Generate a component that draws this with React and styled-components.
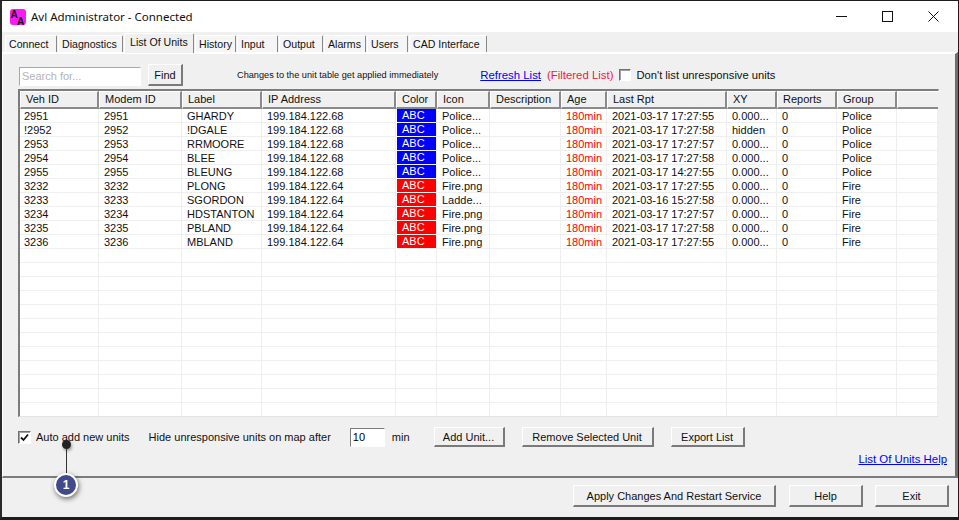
import React from 'react'
import styled, { createGlobalStyle } from 'styled-components'

const GlobalStyle = createGlobalStyle`
  html, body {
    margin: 0;
    padding: 0;
    background: #f0f0f0;
    overflow: hidden;
  }
  * {
    box-sizing: border-box;
  }
`

const Window = styled.div`
  position: relative;
  display: flex;
  flex-direction: column;
  width: 959px;
  height: 520px;
  border-top: 1px solid #1c1c1c;
  border-left: 2px solid #2a2a2a;
  border-right: 1px solid #1c1c1c;
  border-bottom: 3px solid #1c1c1c;
  background: #f0f0f0;
  font-family: 'Liberation Sans', Arial, sans-serif;
  font-size: 11px;
  color: #111;
`

const TitleBar = styled.div`
  display: flex;
  align-items: center;
  flex: none;
  height: 31px;
  padding-left: 8px;
  background: #fff;
`

const Title = styled.span`
  margin-left: 5px;
  font-family: 'Noto Sans', sans-serif;
  font-size: 11.5px;
  color: #111;
`

const Controls = styled.div`
  display: flex;
  margin-left: auto;
  padding-right: 19px;
  gap: 35px;
`

const TabStrip = styled.div`
  display: flex;
  align-items: flex-end;
  flex: none;
  height: 20px;
  padding-left: 3px;
  gap: 1px;
`

const Tab = styled.div`
  display: flex;
  align-items: center;
  width: ${p => p.$w}px;
  height: ${p => (p.$active ? 20 : 17)}px;
  padding-left: ${p => (p.$active ? 5 : 3)}px;
  padding-bottom: ${p => (p.$active ? 3 : 0)}px;
  background: ${p => (p.$active ? '#f0f0f0' : '#f5f5f5')};
  border-top: 1px solid #fff;
  border-left: 1px solid #fff;
  border-right: 1px solid #888;
  border-radius: 2px 2px 0 0;
  font-size: 10.6px;
  white-space: nowrap;
  position: relative;
  z-index: ${p => (p.$active ? 1 : 0)};
  margin-bottom: ${p => (p.$active ? -1 : 0)}px;
`

const Panel = styled.div`
  display: flex;
  flex-direction: column;
  flex: none;
  height: 426px;
  padding: 10px 0 0 15px;
  border-top: 2px solid #fff;
  border-left: 1px solid #fff;
  border-right: 3px solid #6e6e6e;
  border-bottom: 2px solid #7c7c7c;
`

const Row = styled.div`
  display: flex;
  align-items: center;
  flex: none;
  height: ${p => p.$h}px;
  margin-top: ${p => p.$top || 0}px;
`

const SearchBox = styled.input`
  width: 122px;
  height: 19px;
  margin: 2px 0 0 1px;
  padding: 0 2px;
  border: 1px solid #fff;
  border-top-color: #a8a8a8;
  border-left-color: #a8a8a8;
  background: #fff;
  font: inherit;
  outline: none;
  &::placeholder {
    color: #b4b4b4;
    opacity: 1;
  }
`

const Button = styled.button`
  flex: none;
  width: ${p => p.$w}px;
  height: ${p => p.$h || 20}px;
  margin-left: ${p => p.$left || 0}px;
  padding: 0;
  background: #f0f0f0;
  border: 1px solid #fff;
  border-right: 2px solid #7a7a7a;
  border-bottom: 2px solid #7a7a7a;
  font: inherit;
  color: #111;
`

const Hint = styled.span`
  margin-left: ${p => p.$left}px;
  font-size: 9.2px;
  white-space: nowrap;
`

const Link = styled.a`
  margin-left: ${p => p.$left || 0}px;
  color: #0000ff;
  font-size: 11.4px;
  text-decoration: underline;
  white-space: nowrap;
`

const Filtered = styled.span`
  margin-left: 6px;
  color: #f5163c;
  font-size: 11.4px;
  white-space: nowrap;
`

const Check = styled.span`
  display: flex;
  align-items: center;
  justify-content: center;
  flex: none;
  width: ${p => p.$size}px;
  height: ${p => p.$size}px;
  margin-left: ${p => p.$left || 0}px;
  background: #fff;
  border: 1px solid #fff;
  border-top: 1px solid #707070;
  border-left: 1px solid #707070;
  box-shadow: inset 1px 1px 0 #a0a0a0;
`

const Label = styled.span`
  margin-left: ${p => p.$left}px;
  font-size: ${p => p.$size || 11}px;
  white-space: nowrap;
`

const Table = styled.div`
  flex: none;
  width: 921px;
  height: 328px;
  margin-top: 3px;
  overflow: hidden;
  background: #fff;
  border-top: 2px solid #7c7c7c;
  border-left: 2px solid #7c7c7c;
  border-right: 1px solid #f0f0f0;
  border-bottom: 1px solid #e4e4e4;
`

const columns = [79, 83, 80, 134, 41, 53, 71, 46, 120, 50, 60, 60, 41]

const HeadRow = styled.div`
  display: grid;
  grid-template-columns: ${columns.map(c => `${c}px`).join(' ')};
  height: 18px;
`

const HeadCell = styled.div`
  display: flex;
  align-items: center;
  padding: 0 0 1px 5px;
  background: #f0f0f0;
  border-top: 1px solid #fff;
  border-left: 1px solid #fff;
  border-right: 2px solid #8a8a8a;
  border-bottom: 2px solid #8a8a8a;
  white-space: nowrap;
  &:last-child {
    border-right: 0;
  }
`

const BodyRow = styled.div`
  display: grid;
  grid-template-columns: ${columns.map(c => `${c}px`).join(' ')};
  height: 14px;
`

const Cell = styled.div`
  padding-left: 5px;
  line-height: 14px;
  white-space: nowrap;
  overflow: hidden;
  color: ${p => p.$color || '#111'};
  border-right: 1px solid #efefef;
  border-bottom: 1px solid #efefef;
  &:first-child {
    padding-left: 4px;
  }
`

const Swatch = styled.div`
  padding-left: 5px;
  line-height: 13px;
  color: #fff;
  background: ${p => p.$bg};
  margin-left: 1px;
  border-bottom: 1px solid #efefef;
  border-right: 1px solid #efefef;
`

const Number = styled.input`
  width: 35px;
  height: 19px;
  margin-left: 19px;
  padding: 0 2px;
  border: 1px solid #fff;
  border-top-color: #7c7c7c;
  border-left-color: #7c7c7c;
  background: #fff;
  font: inherit;
  outline: none;
`

const HelpRow = styled.div`
  display: flex;
  justify-content: flex-end;
  flex: none;
  margin-top: 5px;
  padding-right: 8px;
`

const Footer = styled.div`
  display: flex;
  justify-content: flex-end;
  flex: 1;
  padding: 7px 9px 0 0;
`

const Callout = styled.div`
  position: absolute;
  left: 51px;
  top: 439px;
  display: flex;
  flex-direction: column;
  align-items: center;
  width: 26px;
`

const Dot = styled.span`
  width: 9px;
  height: 9px;
  border-radius: 50%;
  background: #222;
  box-shadow: 1px 2px 3px rgba(0, 0, 0, 0.35);
`

const Stem = styled.span`
  width: 1px;
  height: 27px;
  background: #333;
`

const Badge = styled.span`
  display: flex;
  align-items: center;
  justify-content: center;
  width: 24px;
  height: 24px;
  margin-top: -3px;
  border-radius: 50%;
  background: #414b8c;
  border: 2px solid #fff;
  box-shadow: 1px 2px 5px rgba(0, 0, 0, 0.55);
  color: #fff;
  font-weight: bold;
  font-size: 12px;
`

const units = [
  ['2951', '2951', 'GHARDY', '199.184.122.68', 'Police...', '2021-03-17 17:27:55', '0.000...', 'Police'],
  ['!2952', '2952', '!DGALE', '199.184.122.68', 'Police...', '2021-03-17 17:27:58', 'hidden', 'Police'],
  ['2953', '2953', 'RRMOORE', '199.184.122.68', 'Police...', '2021-03-17 17:27:57', '0.000...', 'Police'],
  ['2954', '2954', 'BLEE', '199.184.122.68', 'Police...', '2021-03-17 17:27:58', '0.000...', 'Police'],
  ['2955', '2955', 'BLEUNG', '199.184.122.68', 'Police...', '2021-03-17 14:27:55', '0.000...', 'Police'],
  ['3232', '3232', 'PLONG', '199.184.122.64', 'Fire.png', '2021-03-17 17:27:55', '0.000...', 'Fire'],
  ['3233', '3233', 'SGORDON', '199.184.122.64', 'Ladde...', '2021-03-16 15:27:58', '0.000...', 'Fire'],
  ['3234', '3234', 'HDSTANTON', '199.184.122.64', 'Fire.png', '2021-03-17 17:27:57', '0.000...', 'Fire'],
  ['3235', '3235', 'PBLAND', '199.184.122.64', 'Fire.png', '2021-03-17 17:27:58', '0.000...', 'Fire'],
  ['3236', '3236', 'MBLAND', '199.184.122.64', 'Fire.png', '2021-03-17 17:27:55', '0.000...', 'Fire'],
]

const headers = ['Veh ID', 'Modem ID', 'Label', 'IP Address', 'Color', 'Icon', 'Description', 'Age', 'Last Rpt', 'XY', 'Reports', 'Group', '']
const tabs = [
  ['Connect', 52], ['Diagnostics', 65], ['List Of Units', 70], ['History', 41], ['Input', 41],
  ['Output', 44], ['Alarms', 42], ['Users', 41], ['CAD Interface', 78],
]

const AppIcon = () => (
  <svg width="16" height="16" viewBox="0 0 16 16">
    <rect width="16" height="16" rx="3" fill="#f81cf0" />
    <text x="0.5" y="8.5" fontSize="10" fontWeight="bold" fontFamily="Liberation Sans" fill="#111">A</text>
    <text x="7" y="15.5" fontSize="10" fontWeight="bold" fontFamily="Liberation Sans" fill="#111">A</text>
  </svg>
)

const WindowIcons = () => (
  <Controls>
    <svg width="11" height="11" viewBox="0 0 11 11"><path d="M0 5.5H11" stroke="#111" /></svg>
    <svg width="11" height="11" viewBox="0 0 11 11"><rect x="0.5" y="0.5" width="10" height="10" fill="none" stroke="#111" /></svg>
    <svg width="11" height="11" viewBox="0 0 11 11"><path d="M0.5 0.5L10.5 10.5M10.5 0.5L0.5 10.5" stroke="#111" /></svg>
  </Controls>
)

const App = () => {
  const emptyRows = Array.from({ length: 12 })
  return (
    <Window>
      <GlobalStyle />
      <TitleBar>
        <AppIcon />
        <Title>Avl Administrator - Connected</Title>
        <WindowIcons />
      </TitleBar>
      <TabStrip>
        {tabs.map(([name, w]) => (
          <Tab key={name} $w={w} $active={name === 'List Of Units'}>{name}</Tab>
        ))}
      </TabStrip>
      <Panel>
        <Row $h={22}>
          <SearchBox placeholder="Search for..." readOnly />
          <Button $w={35} $h={22} $left={7}>Find</Button>
          <Hint $left={54}>Changes to the unit table get applied immediately</Hint>
          <Link $left={42}>Refresh List</Link>
          <Filtered>(Filtered List)</Filtered>
          <Check $size={12} $left={6} />
          <Label $left={5} $size={11.2}>Don't list unresponsive units</Label>
        </Row>
        <Table>
          <HeadRow>
            {headers.map((h, i) => <HeadCell key={i}>{h}</HeadCell>)}
          </HeadRow>
          {units.map(u => (
            <BodyRow key={u[0]}>
              <Cell>{u[0]}</Cell>
              <Cell>{u[1]}</Cell>
              <Cell>{u[2]}</Cell>
              <Cell>{u[3]}</Cell>
              <Swatch $bg={u[7] === 'Police' ? '#0000ff' : '#ff0000'}>ABC</Swatch>
              <Cell>{u[4]}</Cell>
              <Cell />
              <Cell $color="#ff0000">180min</Cell>
              <Cell>{u[5]}</Cell>
              <Cell>{u[6]}</Cell>
              <Cell>0</Cell>
              <Cell>{u[7]}</Cell>
              <Cell />
            </BodyRow>
          ))}
          {emptyRows.map((_, r) => (
            <BodyRow key={r}>
              {columns.map((c, i) => <Cell key={i} />)}
            </BodyRow>
          ))}
        </Table>
        <Row $h={22} $top={9}>
          <Check $size={13} $left={0}>
            <svg width="9" height="9" viewBox="0 0 9 9"><path d="M1 4.5L3.5 7L8 1.5" fill="none" stroke="#111" strokeWidth="1.8" /></svg>
          </Check>
          <Label $left={5}>Auto add new units</Label>
          <Label $left={19}>Hide unresponsive units on map after</Label>
          <Number defaultValue="10" />
          <Label $left={7}>min</Label>
          <Button $w={71} $left={24}>Add Unit...</Button>
          <Button $w={132} $left={17}>Remove Selected Unit</Button>
          <Button $w={74} $left={17}>Export List</Button>
        </Row>
        <HelpRow>
          <Link>List Of Units Help</Link>
        </HelpRow>
      </Panel>
      <Footer>
        <Button $w={203} $h={22}>Apply Changes And Restart Service</Button>
        <Button $w={74} $h={22} $left={13}>Help</Button>
        <Button $w={74} $h={22} $left={12}>Exit</Button>
      </Footer>
      <Callout>
        <Dot />
        <Stem />
        <Badge>1</Badge>
      </Callout>
    </Window>
  )
}

export default App
